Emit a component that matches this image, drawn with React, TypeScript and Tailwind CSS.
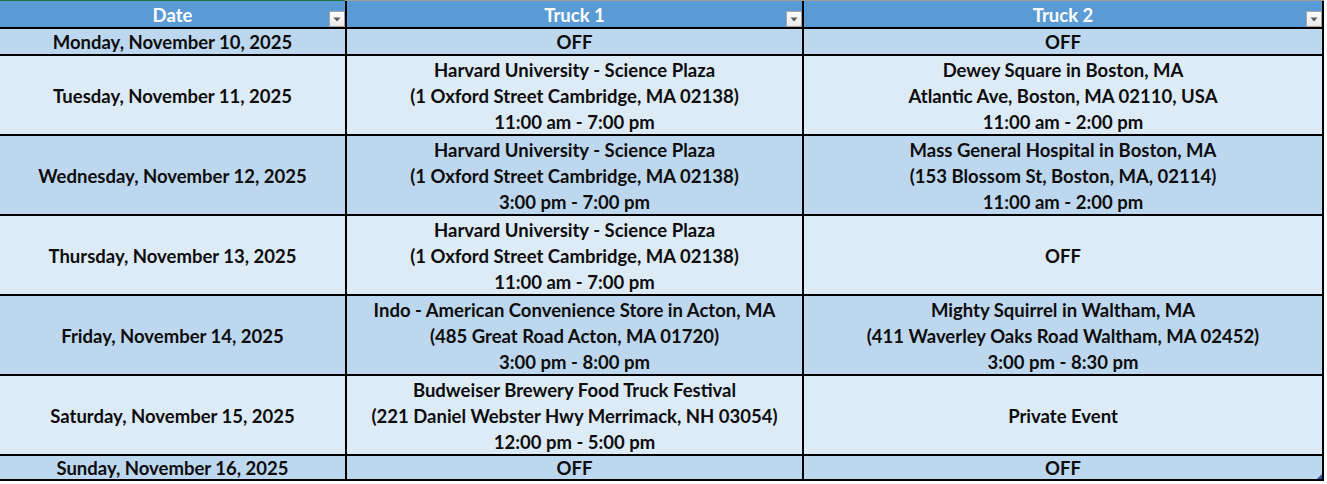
import React from "react";

type Row = {
	date: string;
	truck1: string[];
	truck2: string[];
};

const rows: Row[] = [
	{ date: "Monday, November 10, 2025", truck1: ["OFF"], truck2: ["OFF"] },
	{
		date: "Tuesday, November 11, 2025",
		truck1: [
			"Harvard University - Science Plaza",
			"(1 Oxford Street Cambridge, MA 02138)",
			"11:00 am - 7:00 pm",
		],
		truck2: [
			"Dewey Square in Boston, MA",
			"Atlantic Ave, Boston, MA 02110, USA",
			"11:00 am - 2:00 pm",
		],
	},
	{
		date: "Wednesday, November 12, 2025",
		truck1: [
			"Harvard University - Science Plaza",
			"(1 Oxford Street Cambridge, MA 02138)",
			"3:00 pm - 7:00 pm",
		],
		truck2: [
			"Mass General Hospital in Boston, MA",
			"(153 Blossom St, Boston, MA, 02114)",
			"11:00 am - 2:00 pm",
		],
	},
	{
		date: "Thursday, November 13, 2025",
		truck1: [
			"Harvard University - Science Plaza",
			"(1 Oxford Street Cambridge, MA 02138)",
			"11:00 am - 7:00 pm",
		],
		truck2: ["OFF"],
	},
	{
		date: "Friday, November 14, 2025",
		truck1: [
			"Indo - American Convenience Store in Acton, MA",
			"(485 Great Road Acton, MA 01720)",
			"3:00 pm - 8:00 pm",
		],
		truck2: [
			"Mighty Squirrel in Waltham, MA",
			"(411 Waverley Oaks Road Waltham, MA 02452)",
			"3:00 pm - 8:30 pm",
		],
	},
	{
		date: "Saturday, November 15, 2025",
		truck1: [
			"Budweiser Brewery Food Truck Festival",
			"(221 Daniel Webster Hwy Merrimack, NH 03054)",
			"12:00 pm - 5:00 pm",
		],
		truck2: ["Private Event"],
	},
	{ date: "Sunday, November 16, 2025", truck1: ["OFF"], truck2: ["OFF"] },
];

// little filter button like excel's
function FilterButton() {
	return (
		<div className="absolute right-0 bottom-0 w-[16px] h-[16px] border border-[#a6a6a6] bg-gradient-to-b from-white to-[#e8e8e8] flex items-center justify-center">
			<svg width="8" height="5" viewBox="0 0 8 5">
				<path d="M0.5 0.5 L7.5 0.5 L4 4.5 Z" fill="#5a5a5a" />
			</svg>
		</div>
	);
}

function HeaderCell({ label }: { label: string }) {
	return (
		<div className="relative bg-[#5b9bd5] flex items-center justify-center pt-[2px] text-white">
			<span className="leading-[26px]">{label}</span>
			<FilterButton />
		</div>
	);
}

function Cell({ lines, dark }: { lines: string[]; dark: boolean }) {
	return (
		<div
			className={
				"flex flex-col items-center justify-center text-center text-[#0d0d0d] " +
				(lines.length > 1 ? "pt-[2px] " : "pt-[1px] ") +
				(dark ? "bg-[#bdd7ee]" : "bg-[#ddebf7]")
			}
		>
			{lines.map((line, i) => (
				<div key={i} className="leading-[26px] whitespace-nowrap">
					{line}
				</div>
			))}
		</div>
	);
}

export default function App() {
	return (
		<div className="w-[1327px] h-[484px] bg-white overflow-hidden font-['Lato',sans-serif] font-bold text-[18.5px]">
			{/* top edge of the sheet */}
			<div className="flex h-[1px] w-[1324px]">
				<div className="w-[345px] bg-[#217346]" />
				<div className="flex-1 bg-[#9b9b9b]" />
			</div>

			<div className="relative grid grid-cols-[345px_455px_518px] grid-rows-[26px_25px_78px_78px_78px_78px_78px_23px] gap-[2px] pr-[2px] pb-[2px] bg-black w-[1324px]">
				<HeaderCell label="Date" />
				<HeaderCell label="Truck 1" />
				<HeaderCell label="Truck 2" />

				{rows.map((row, i) => {
					const dark = i % 2 === 0;
					return (
						<React.Fragment key={row.date}>
							<Cell lines={[row.date]} dark={dark} />
							<Cell lines={row.truck1} dark={dark} />
							<Cell lines={row.truck2} dark={dark} />
						</React.Fragment>
					);
				})}

				{/* table resize handle */}
				<div className="absolute right-[2px] bottom-[2px] w-0 h-0 border-l-[5px] border-l-transparent border-b-[5px] border-b-[#2f4fa8]" />
			</div>
		</div>
	);
}
